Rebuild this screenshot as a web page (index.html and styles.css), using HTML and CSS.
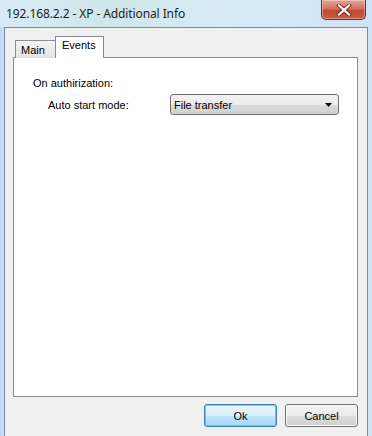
FILE: index.html
```html
<!DOCTYPE html>
<html>
<head>
	<title>Additional Info</title>
	<meta charset="UTF-8">
	<link rel="stylesheet" href="styles.css">
</head>
<body>
	<div class="frame">
		<div class="titlebar">
			<span class="title">192.168.2.2 - XP - Additional Info</span>
			<div class="close">
				<svg width="16" height="12" viewBox="0 0 16 12">
					<path d="M3 1.5 L13 10.5 M13 1.5 L3 10.5" stroke="#6b2a22" stroke-width="4" stroke-linecap="square"/>
					<path d="M3 1.5 L13 10.5 M13 1.5 L3 10.5" stroke="#ffffff" stroke-width="2.2" stroke-linecap="square"/>
				</svg>
			</div>
		</div>
		<div class="client">
			<div class="tabs">
				<div class="tab">Main</div>
				<div class="tab active">Events</div>
			</div>
			<div class="panel">
				<div class="group-title">On authirization:</div>
				<div class="row">
					<label for="mode">Auto start mode:</label>
					<div class="select" id="mode">
						<span>File transfer</span>
						<svg width="7" height="4" viewBox="0 0 7 4"><path d="M0 0 H7 L3.5 4 Z" fill="#000"/></svg>
					</div>
				</div>
			</div>
			<div class="buttons">
				<button type="button" class="btn default">Ok</button>
				<button type="button" class="btn">Cancel</button>
			</div>
		</div>
	</div>
</body>
</html>
```
FILE: styles.css
```css
* {
	box-sizing: border-box;
}

body {
	margin: 0;
	width: 372px;
	height: 436px;
	overflow: hidden;
	font-family: "Liberation Sans", Arial, sans-serif;
	font-size: 11px;
	color: #000;
}

.frame {
	height: 436px;
	display: flex;
	flex-direction: column;
	background: linear-gradient(90deg, #b9d8f1 0px, #c9e1f4 4px, #d6e8f5 50%, #cfe3f4 100%);
}

.titlebar {
	height: 27px;
	flex-shrink: 0;
	display: flex;
	align-items: flex-start;
	background: linear-gradient(90deg, #d9ebf6 0%, #cfe6e8 30%, #d8ebf7 60%, #cde4f6 100%);
}

.title {
	font-family: "Noto Sans", "Open Sans", sans-serif;
	font-size: 12px;
	margin: 5px 0 0 6px;
	color: #1e1e1e;
	letter-spacing: -0.1px;
}

.close {
	margin-left: auto;
	margin-right: 6px;
	width: 45px;
	height: 20px;
	border: 1px solid #6e2f27;
	border-top: none;
	border-radius: 0 0 5px 5px;
	background: linear-gradient(#e6a494 0%, #d37462 45%, #c14a33 55%, #cc5d42 100%);
	display: flex;
	align-items: center;
	justify-content: center;
	box-shadow: inset 0 0 0 1px rgba(255, 255, 255, 0.35);
}

.client {
	flex: 1;
	margin: 0 4px 0 4px;
	border: 1px solid #7b8aa0;
	border-bottom: none;
	background: #f0f0f0;
	padding: 8px 9px 0 8px;
	display: flex;
	flex-direction: column;
}

.tabs {
	display: flex;
	align-items: flex-end;
	padding-left: 2px;
	margin-bottom: -1px;
	position: relative;
}

.tab {
	width: 41px;
	height: 18px;
	padding-left: 5px;
	border: 1px solid #898c95;
	border-bottom: none;
	background: linear-gradient(#f4f4f4, #e2e2e2);
	line-height: 19px;
	margin-right: -1px;
}

.tab.active {
	width: 49px;
	height: 22px;
	padding-left: 6px;
	background: #fff;
	line-height: 17px;
	margin-right: 0;
}

.panel {
	height: 340px;
	flex-shrink: 0;
	border: 1px solid #898c95;
	background: #fff;
	padding: 0 0 0 19px;
}

.group-title {
	margin-top: 19px;
	line-height: 13px;
}

.row {
	display: flex;
	align-items: center;
	margin-top: 4px;
	padding-left: 15px;
}

.row label {
	width: 122px;
	flex-shrink: 0;
}

.select {
	width: 169px;
	height: 21px;
	flex-shrink: 0;
	border: 1px solid #707070;
	border-radius: 3px;
	background: linear-gradient(#f2f2f2 0%, #ebebeb 50%, #dddddd 51%, #cfcfcf 100%);
	display: flex;
	align-items: center;
	justify-content: space-between;
	padding: 0 6px 0 3px;
}

.buttons {
	display: flex;
	justify-content: flex-end;
	gap: 8px;
	margin-top: 7px;
}

.btn {
	width: 73px;
	height: 23px;
	font-family: "Liberation Sans", Arial, sans-serif;
	font-size: 11px;
	color: #000;
	border: 1px solid #707070;
	border-radius: 3px;
	background: linear-gradient(#f2f2f2 0%, #ebebeb 50%, #dddddd 51%, #cfcfcf 100%);
	box-shadow: inset 0 0 0 1px #fcfcfc;
	padding: 0;
}

.btn.default {
	border-color: #3c7fb1;
	box-shadow: inset 0 0 0 1px #48d8fb;
	background: linear-gradient(#eaf6fd 0%, #d9f0fc 50%, #bee6fd 51%, #a7d9f5 100%);
}
```
